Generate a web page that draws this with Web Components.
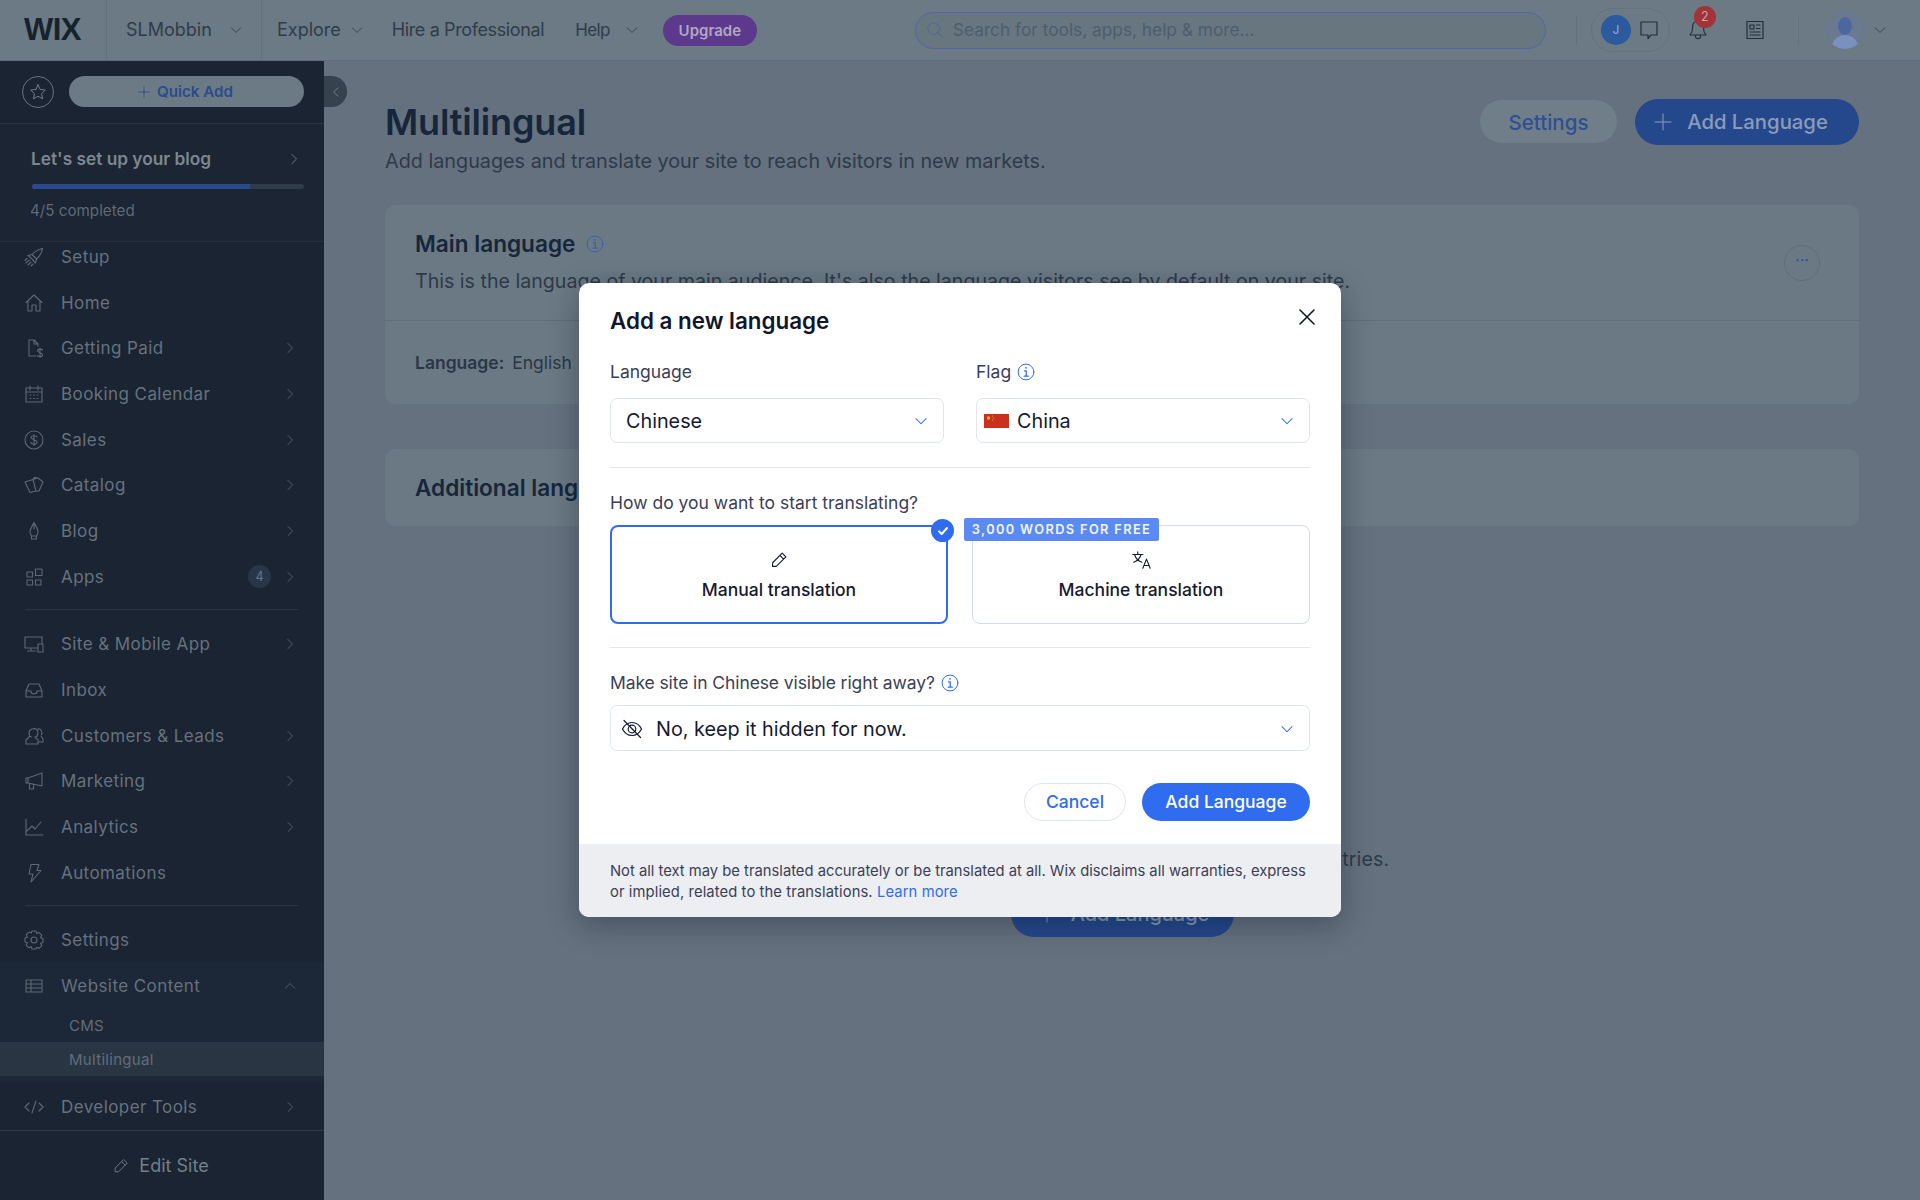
<!DOCTYPE html>
<html lang="en"><head><meta charset="utf-8"><title>Multilingual</title>
<style>
html,body{margin:0;padding:0;height:100%;overflow:hidden}
body{font-family:Inter,"Noto Sans",sans-serif;background:#65717e}
</style></head><body>
<wix-app></wix-app>
<script>
const I={
chev:'<path d="M9.5 6.5l5.5 5.5-5.5 5.5"/>',
down:'<path d="M6.5 9.5l5.5 5.5 5.5-5.5"/>',
up:'<path d="M6.5 14.5l5.5-5.5 5.5 5.5"/>',
left:'<path d="M14.5 6.5L9 12l5.5 5.5"/>',
rocket:'<path d="M10 9.5C13 6 16.5 4.5 20.5 3.500C20 7.500 18 11 14.500 14l-4.500-4.500zM10 9.500l-4 1 2.500 2M14.500 14l-1 4-2.500-2.500M8.500 12.500l3 3M7 15l-3 3M9 17l-3 3M5 13.500l-2 2M11 19l-2 2"/>',
home:'<path d="M4 11.500L12 4l8 7.500M6 10v10h4v-6h4v6h4V10"/>',
paid:'<path d="M14 20H7V4h5l4 4v2M12 4v4h4M18 12v9M20.500 14c-.5-1-4.500-1.500-5 .5s5 2 5 4.500-4.500 2-5 .5"/>',
cal:'<path d="M4 6h16v14H4zM4 10h16M8 4v4M16 4v4M8 13h.9M11.500 13h.9M15 13h.9M8 16.500h.9M11.500 16.500h.9M15 16.500h.9"/>',
sales:'<circle cx="12" cy="12" r="9"/><path d="M12 6.500v11M15 9c-.5-1.500-5.500-2-6 .2s6 2.300 6 5-5.500 2.300-6 .3"/>',
catalog:'<path d="M3 9l8-2.500L14 18l-6 1.500zM11 6.500L16 5l5 4-4 9-3 0M11 6.500l1-2 4 .5"/>',
blog:'<path d="M12 3.500c-1 3-4 5.500-4 9 0 2 1 3.500 1.500 4.500h5c.5-1 1.500-2.500 1.500-4.500 0-3.500-3-6-4-9zM12 3.500V10M9.500 17v3h5v-3"/>',
apps:'<path d="M5 7h5.500v5H5zM13.500 4H20v6.500h-6.500zM5 15h5.500v5H5zM13.500 15H19v5h-5.500z"/>',
site:'<path d="M15 16H3V5h17v6M9 16v3M5.500 19H14M16 12h5v8h-5z"/>',
inbox:'<path d="M4 13l3-7h10l3 7v6H4zM4 13h5c0 4 6 4 6 0h5"/>',
cust:'<path d="M9.500 13C7 13 6.500 9.500 7.500 7 8.500 4.500 14 3.500 15.500 6.500c1 2.500 0 6-2 6.500M7.500 12.500L4 16v4h12v-4l-3-3M16 5c3-1 4.500 3 3.500 5.500M19 12l2 3v3h-5"/>',
mkt:'<path d="M6 9l14-5v13L6 14zM6 9H4v5h2M7.500 14.500V20h4v-4"/>',
ana:'<path d="M4 4v16h17M5 16l5-5 3 3 6-7"/>',
auto:'<path d="M9 3.500h8l-2 6h4L9 21l2-8H7z"/>',
gear:'<circle cx="12" cy="12" r="3"/><path d="M10 3h4l.7 2.600 2.400-1 2.700 2.700-1.200 2.400 2.400.8v4l-2.400.8 1.200 2.400-2.700 2.700-2.400-1.200L14 21h-4l-.7-2.400-2.400 1.200-2.700-2.700 1.200-2.400L3 14v-4l2.400-.8-1.200-2.400 2.700-2.700 2.400 1z"/>',
table:'<path d="M4 6h16v12H4zM4 10h16M4 14h16M9 6v12"/>',
code:'<path d="M7 8l-4 4 4 4M17 8l4 4-4 4M14 6l-4 12"/>',
pen:'<path d="M15.500 4.500l4 4L9 19H5v-4zM13 7l4 4"/>',
star:'<path d="M12 4l2.400 5.200 5.600.7-4.100 3.900 1.100 5.600L12 16.600l-5 2.800 1.100-5.600L4 9.900l5.600-.7z"/>',
plus:'<path d="M12 4v16M4 12h16"/>',
search:'<circle cx="10.500" cy="10.500" r="7"/><path d="M15.500 15.500l5.500 5.500"/>',
chat:'<path d="M4 4h16v13h-6l-3 3.500V17H4z"/>',
bell:'<path d="M12 3c-4 0-5.500 3-5.500 7 0 4-1.500 6-2.500 7h16c-1-1-2.500-3-2.500-7 0-4-1.500-7-5.500-7zM9.500 17v1.500c0 3 5 3 5 0V17"/>',
news:'<path d="M4 3.500h16v17H4zM7 7h4v4H7zM13.500 7H17M13.500 10.500H17M7 14h10M7 17h10"/>',
info:'<circle cx="12" cy="12" r="9.500"/><path d="M10 10.500h2.300v6.500M9.800 17h5" stroke-width="1.500"/><circle cx="12" cy="7" r="1.100" fill="currentColor" stroke="none"/>',
x:'<path d="M5 5l14 14M19 5L5 19"/>',
eye:'<path d="M2.500 12c2-4 5.500-6.500 9.500-6.500s7.500 2.500 9.500 6.500c-2 4-5.500 6.500-9.500 6.500S4.500 16 2.500 12z"/><circle cx="12" cy="12" r="3.800"/><path d="M4 3.500l16.500 17"/>',
translate:'<path d="M3 6h11M8.500 3v3M5 6c1 4 4 7 8 8.500M12 6c-1 4-4 7-8 8.500"/><path d="M14 21l4-10 4 10M15.500 18h5"/>',
check:'<path d="M6 12.500l4 4 8-9" stroke-width="3"/>'
};
const ic=(n,s=24,sw=1.2,st='')=>`<svg width="${s}" height="${s}" viewBox="0 0 24 24" fill="none" stroke="currentColor" stroke-width="${sw}" stroke-linecap="round" stroke-linejoin="round" style="display:block;flex:none;${st}">${I[n]}</svg>`;
const FONT='Inter,"Noto Sans",sans-serif';
function def(tag,fn){customElements.define(tag,class extends HTMLElement{connectedCallback(){if(this.shadowRoot)return;this.attachShadow({mode:'open'}).innerHTML=fn(this)}})}

def('wix-nav-item',e=>{const a=n=>e.getAttribute(n);const dir=a('arrow');return `<style>
:host{display:flex;align-items:center;height:45.7px;box-sizing:border-box;padding:2px 24px 0 22px;color:#66727e;font:400 17px/24px ${FONT};letter-spacing:.42px}
.i{width:24px;height:24px;margin-right:15px;color:#5d6975}
.t{flex:1;white-space:nowrap}
.b{width:23px;height:23px;border-radius:50%;background:#283648;color:#6a7683;font-size:12.500px;line-height:23px;text-align:center;margin-right:9px;letter-spacing:0}
.c{color:#5d6975}
</style><span class="i">${ic(a('icon'),24,1.1)}</span><span class="t"><slot></slot></span>${a('badge')?`<span class="b">${a('badge')}</span>`:''}${dir?`<span class="c">${ic(dir,20,1)}</span>`:''}`});

def('wix-sub-item',e=>`<style>
:host{display:flex;align-items:center;height:34px;box-sizing:border-box;padding:2px 0 0 69px;font:400 15px/20px ${FONT};color:#616d79;letter-spacing:.3px;background:${e.hasAttribute('active')?'#2a3544':'transparent'}}
</style><slot></slot>`);

def('wix-sidebar',()=>`<style>
:host{display:flex;flex-direction:column;width:324px;height:1139px;background:#1a2432;position:relative;flex:none;font-family:${FONT}}
.q{height:63px;box-sizing:border-box;border-bottom:1px solid #2b3645;display:flex;align-items:flex-start;padding:15px 20px 0 22px;gap:15px;flex:none}
.star{width:30px;height:30px;border-radius:50%;border:1px solid #66727e;color:#7a8590;display:flex;align-items:center;justify-content:center;flex:none}
.add{flex:1;height:31px;border-radius:16px;background:#6b7a84;color:#2b4c8c;font:600 15.200px/31px ${FONT};display:flex;align-items:center;justify-content:center;gap:5px;padding-right:4px}
.tab{position:absolute;left:324px;top:15px;width:23px;height:31px;background:#37424f;border-radius:0 16px 16px 0;color:#8a949d;display:flex;align-items:center;justify-content:center}
.s{height:118px;box-sizing:border-box;border-bottom:1px solid #242f3e;padding:23px 20px 0 31px;flex:none;background:#1b2533}
.r{display:flex;align-items:center;justify-content:space-between;color:#7c8791;font:600 17.300px/24px ${FONT}}
.p{height:5px;background:#303b49;border-radius:3px;margin:13px 0 10px 1px}
.p i{display:block;width:218px;height:5px;background:#294a8c;border-radius:3px 0 0 3px}
.d{font:400 15.200px/24px ${FONT};color:#5e6a76;margin-left:-1px}
.n{flex:1;overflow:hidden;min-height:0}
.in{margin-top:-9px}
hr{border:0;height:1px;background:#2b3645;margin:10px 26px 11px 25px}
.w{background:#1c2737;padding-bottom:7px;}
.f{flex:none;height:70px;box-sizing:border-box;border-top:1px solid #2f3a49;display:flex;align-items:center;justify-content:center;gap:8px;color:#737f8a;font:400 18px/24px ${FONT};padding-right:4px}
</style>
<div class="q"><span class="star">${ic('star',22,1)}</span><span class="add">${ic('plus',16,1.2)}Quick Add</span></div>
<div class="tab">${ic('left',18,1)}</div>
<div class="s"><div class="r"><span>Let's set up your blog</span>${ic('chev',20,1)}</div><div class="p"><i></i></div><div class="d">4/5 completed</div></div>
<div class="n"><div class="in">
<wix-nav-item icon="rocket">Setup</wix-nav-item>
<wix-nav-item icon="home">Home</wix-nav-item>
<wix-nav-item icon="paid" arrow="chev">Getting Paid</wix-nav-item>
<wix-nav-item icon="cal" arrow="chev">Booking Calendar</wix-nav-item>
<wix-nav-item icon="sales" arrow="chev">Sales</wix-nav-item>
<wix-nav-item icon="catalog" arrow="chev">Catalog</wix-nav-item>
<wix-nav-item icon="blog" arrow="chev">Blog</wix-nav-item>
<wix-nav-item icon="apps" arrow="chev" badge="4">Apps</wix-nav-item>
<hr>
<wix-nav-item icon="site" arrow="chev">Site &amp; Mobile App</wix-nav-item>
<wix-nav-item icon="inbox">Inbox</wix-nav-item>
<wix-nav-item icon="cust" arrow="chev">Customers &amp; Leads</wix-nav-item>
<wix-nav-item icon="mkt" arrow="chev">Marketing</wix-nav-item>
<wix-nav-item icon="ana" arrow="chev">Analytics</wix-nav-item>
<wix-nav-item icon="auto">Automations</wix-nav-item>
<hr>
<wix-nav-item icon="gear">Settings</wix-nav-item>
<div class="w">
<wix-nav-item icon="table" arrow="up">Website Content</wix-nav-item>
<wix-sub-item>CMS</wix-sub-item>
<wix-sub-item active>Multilingual</wix-sub-item>
</div>
<wix-nav-item icon="code" arrow="chev">Developer Tools</wix-nav-item>
</div></div>
<div class="f">${ic('pen',20,1.1)}<span>Edit Site</span></div>`);

def('wix-topbar',()=>`<style>
:host{display:flex;align-items:center;height:61px;box-sizing:border-box;background:#6b7a84;border-bottom:1px solid #606d78;font:400 18px/24px ${FONT};color:#2f3c4a;flex:none}
.logo{width:107px;height:60px;box-sizing:border-box;border-right:1px solid #65727c;padding-left:24px;font:700 31px/60px "Liberation Sans",sans-serif;color:#17222f;letter-spacing:-.5px}
.site{width:155px;height:60px;box-sizing:border-box;border-right:1px solid #65727c;display:flex;align-items:center;padding-left:19px;gap:14px}
.m{display:flex;align-items:center;gap:6px;white-space:nowrap}
.up{width:94px;height:31px;border-radius:16px;background:#5c398c;color:#b0a7c2;font:600 15px/31px ${FONT};text-align:center;margin-left:21px}
.se{width:631px;height:37px;box-sizing:border-box;border:1px solid #5068a8;border-radius:19px;margin-left:158px;display:flex;align-items:center;padding-left:9px;gap:8px;color:#4d6498;background:#68767f}
.se span{color:#4e5d6d;font-size:17.300px}
.dv{width:1px;height:30px;background:#65727c}
.g{width:79px;height:44px;box-sizing:border-box;border:1px solid #65727f;border-radius:22px;display:flex;align-items:center;padding-left:9px;gap:6px;margin-left:14px}
.j{width:30px;height:30px;border-radius:50%;background:#2c5a9f;color:#96abc6;font:400 12px/30px ${FONT};text-align:center}
.b{position:relative;color:#222e3c}
.b i{position:absolute;left:8px;top:-12px;width:22px;height:22px;border-radius:50%;background:#a13339;color:#c9a5a7;font:400 12.500px/22px ${FONT};text-align:center}
.av{width:38px;height:38px;border-radius:50%;background:#66748c;overflow:hidden;margin-left:27px}
</style>
<div class="logo">WIX</div>
<div class="site"><span>SLMobbin</span>${ic('down',20,1)}</div>
<div class="m" style="margin-left:15px">Explore ${ic('down',20,1)}</div>
<div class="m" style="margin-left:25px;letter-spacing:-.38px">Hire a Professional</div>
<div class="m" style="margin-left:31px;font-size:17px;letter-spacing:-.6px;gap:12px">Help ${ic('down',20,1)}</div>
<div class="up">Upgrade</div>
<div class="se">${ic('search',20,1)}<span>Search for tools, apps, help &amp; more...</span></div>
<div class="dv" style="margin-left:30px"></div>
<div class="g"><span class="j">J</span>${ic('chat',24,1.2,'color:#222e3c')}</div>
<div class="b" style="margin-left:16px">${ic('bell',24,1.1)}<i>2</i></div>
<div style="margin-left:33px;color:#222e3c">${ic('news',24,1.2)}</div>
<div class="dv" style="margin-left:31px"></div>
<div class="av"><svg width="38" height="38" viewBox="0 0 38 38"><rect width="38" height="38" fill="#6a7890"/><ellipse cx="19" cy="15" rx="7" ry="9" fill="#4c66a0"/><ellipse cx="19" cy="36" rx="13" ry="12" fill="#7a91c0"/></svg></div>
<div style="margin-left:6px">${ic('down',20,1)}</div>`);

def('wix-card',e=>`<style>
:host{display:block;background:#6b7984;border-radius:10px;position:relative;margin-bottom:45px}
</style><slot></slot>`);

def('wix-page',()=>`<style>
:host{display:block;flex:1;padding:0 61px;font-family:${FONT};color:#2a3646;min-width:0}
.h{display:flex;justify-content:space-between;height:144px;box-sizing:border-box;padding-top:38px}
h1{margin:0 0 2px;font:600 36px/47px ${FONT};color:#17263a;letter-spacing:-.15px}
p{margin:0;font:400 19.630px/26px ${FONT};color:#2e3a49}
.a{display:flex;gap:18px;align-items:flex-start}
.st{width:137px;height:43px;border-radius:22px;background:#6f7e88;color:#2f4f92;font:500 20.500px/45px ${FONT};text-align:center;margin-top:1px}
.ad{width:224px;height:46px;box-sizing:border-box;padding-right:15px;border-radius:23px;background:#25488c;color:#8a9cba;font:500 20.300px/48px ${FONT};display:flex;align-items:center;justify-content:center;gap:12px}
.c1{padding:21px 30px 0;height:199px;box-sizing:border-box}
h2{margin:0;font:600 22.600px/36px ${FONT};color:#17263a;display:flex;align-items:center;gap:10px}
.inf{color:#3a5fae}
.row{border-top:1px solid #616e79;margin:26px -30px 0;padding:29px 30px;font-size:17.500px;line-height:26px;color:#2a3646}
.row b{font-weight:600;margin-right:8px}
.dots{position:absolute;right:39px;top:40px;width:36px;height:36px;box-sizing:border-box;border:1px solid #616e79;border-radius:50%;color:#355598;text-align:center;font:700 14px/28px ${FONT}}
.c2{height:77px;box-sizing:border-box;padding:21px 30px}
.e{text-align:center;padding-top:275px}
.e p{margin-bottom:19px;white-space:nowrap;letter-spacing:.12px}
.e span{display:inline-flex;width:223px;height:46px;border-radius:23px;background:#25488c;color:#8a9cba;font:500 20px/46px ${FONT};align-items:center;justify-content:center;gap:12px}
</style>
<div class="h"><div><h1>Multilingual</h1><p style="font-size:19.800px">Add languages and translate your site to reach visitors in new markets.</p></div>
<div class="a"><div class="st">Settings</div><div class="ad">${ic('plus',24,1)}Add Language</div></div></div>
<wix-card><div class="c1"><h2>Main language <span class="inf">${ic('info',20,1.1)}</span></h2>
<p style="margin-top:6px;white-space:nowrap">This is the language of your main audience. It's also the language visitors see by default on your site.</p>
<div class="row"><b>Language:</b>English</div><div class="dots">···</div></div></wix-card>
<wix-card><div class="c2"><h2>Additional languages</h2></div></wix-card>
<div class="e"><p>Translate your site to reach visitors in different countries.</p><span>${ic('plus',24,1)}Add Language</span></div>`);

def('wix-select',e=>`<style>
:host{display:flex;align-items:center;height:${e.getAttribute('h')||45}px;box-sizing:border-box;border:1px solid #dfe5f3;border-radius:7px;background:#fff;padding:1px 11px 0 ${e.getAttribute('pl')||15}px;font:400 19.800px/26px ${FONT};color:#151a30}
.t{flex:1;display:flex;align-items:center;white-space:nowrap}
.c{color:#2f6cf0}
</style><span class="t"><slot></slot></span><span class="c">${ic('down',22,1.1)}</span>`);

def('wix-choice',e=>{const s=e.hasAttribute('selected');return `<style>
:host{display:flex;flex-direction:column;align-items:center;box-sizing:border-box;height:99px;border:${s?2:1}px solid ${s?'#2f6cf0':'#d5dbec'};border-radius:8px;position:relative;padding-top:${s?22:23}px;font:450 17.500px/24px ${FONT};color:#151a30}
.i{height:24px;margin-bottom:5px}
.k{position:absolute;right:-8px;top:-8px;width:23px;height:23px;border-radius:50%;background:#2f6cf0;color:#fff;display:flex;align-items:center;justify-content:center}
.tag{position:absolute;left:-9px;top:-8px;height:23px;width:195px;background:#5a8af2;border-radius:2px;color:#f1f5fe;font:600 12.800px/23px ${FONT};letter-spacing:1.35px;text-align:center;white-space:nowrap}
</style>${s?`<span class="k">${ic('check',16,3)}</span>`:''}${e.getAttribute('tag')?`<span class="tag">${e.getAttribute('tag')}</span>`:''}<span class="i">${ic(e.getAttribute('icon'),22,1.2)}</span><slot></slot>`});

def('wix-modal',()=>`<style>
:host{display:flex;flex-direction:column;width:762px;height:634px;background:#fff;border-radius:10px;overflow:hidden;box-shadow:0 8px 30px rgba(10,20,35,.35);position:relative;font-family:${FONT};color:#151a30}
.b{padding:23px 31px 0;flex:1}
h2{margin:0;font:600 22.400px/30px ${FONT};color:#12162b}
.x{position:absolute;right:22px;top:22px;color:#12162b}
.l{font:400 17.500px/24px ${FONT};color:#3b4057;display:flex;align-items:center;gap:5px;white-space:nowrap}
.inf{color:#2f6cf0}
.g2{display:grid;grid-template-columns:334px 334px;column-gap:32px;margin-top:24px}
.g2 wix-select{margin-top:14px}
hr{border:0;height:1px;background:#e4e6ea;margin:24px 0 23px}
hr.t{margin-top:23px}
.g3{display:grid;grid-template-columns:338px 338px;column-gap:24px;margin-top:10px}
.flag{margin:0 8px 0 -8px;flex:none;display:block}
.eye{margin-right:12px;display:block;flex:none}
.act{display:flex;justify-content:flex-end;gap:16px;margin-top:32px}
.btn{height:38px;border-radius:19px;box-sizing:border-box;font:500 17.500px/36px ${FONT};text-align:center}
.ca{width:102px;border:1px solid #dfe5f3;color:#2f6cf0}
.ok{width:168px;background:#2f6cf0;color:#fff;line-height:38px}
.f{height:73px;box-sizing:border-box;background:#eceef2;padding:17px 20px 0 31px;font:400 14.770px/21px ${FONT};color:#3b4057;white-space:nowrap}
.f span{letter-spacing:.1px}
a{color:#2f6cf0;text-decoration:none}
</style>
<div class="b">
<h2>Add a new language</h2><span class="x">${ic('x',24,1.6)}</span>
<div class="g2"><div><div class="l">Language</div><wix-select>Chinese</wix-select></div>
<div><div class="l">Flag <span class="inf">${ic('info',20,1.2)}</span></div><wix-select><svg class="flag" width="25" height="14" viewBox="0 0 25 14"><rect width="25" height="14" fill="#c9301f"/><circle cx="4.500" cy="4" r="1.700" fill="#e8b02c"/><circle cx="8.500" cy="2" r=".6" fill="#e8b02c"/><circle cx="9.500" cy="4" r=".6" fill="#e8b02c"/><circle cx="8.500" cy="6" r=".6" fill="#e8b02c"/></svg>China</wix-select></div></div>
<hr>
<div class="l">How do you want to start translating?</div>
<div class="g3"><wix-choice selected icon="pen">Manual translation</wix-choice><wix-choice icon="translate" tag="3,000 WORDS FOR FREE">Machine translation</wix-choice></div>
<hr class="t">
<div class="l" style="letter-spacing:-.1px">Make site in Chinese visible right away? <span class="inf">${ic('info',20,1.2)}</span></div>
<wix-select h="46" pl="9" style="margin-top:10px"><span class="eye">${ic('eye',24,1.2)}</span>No, keep it hidden for now.</wix-select>
<div class="act"><div class="btn ca">Cancel</div><div class="btn ok">Add Language</div></div>
</div>
<div class="f">Not all text may be translated accurately or be translated at all. Wix disclaims all warranties, express<br><span>or implied, related to the translations. <a>Learn more</a></span></div>`);

def('wix-app',()=>`<style>
:host{display:flex;flex-direction:column;width:1920px;height:1200px;background:#65717e;position:relative;overflow:hidden}
.mn{display:flex;flex:1;min-height:0}
.sc{position:absolute;inset:0;display:flex;align-items:center;justify-content:center;z-index:5}
</style>
<wix-topbar></wix-topbar>
<div class="mn"><wix-sidebar></wix-sidebar><wix-page></wix-page></div>
<div class="sc"><wix-modal></wix-modal></div>`);
</script></body></html>
